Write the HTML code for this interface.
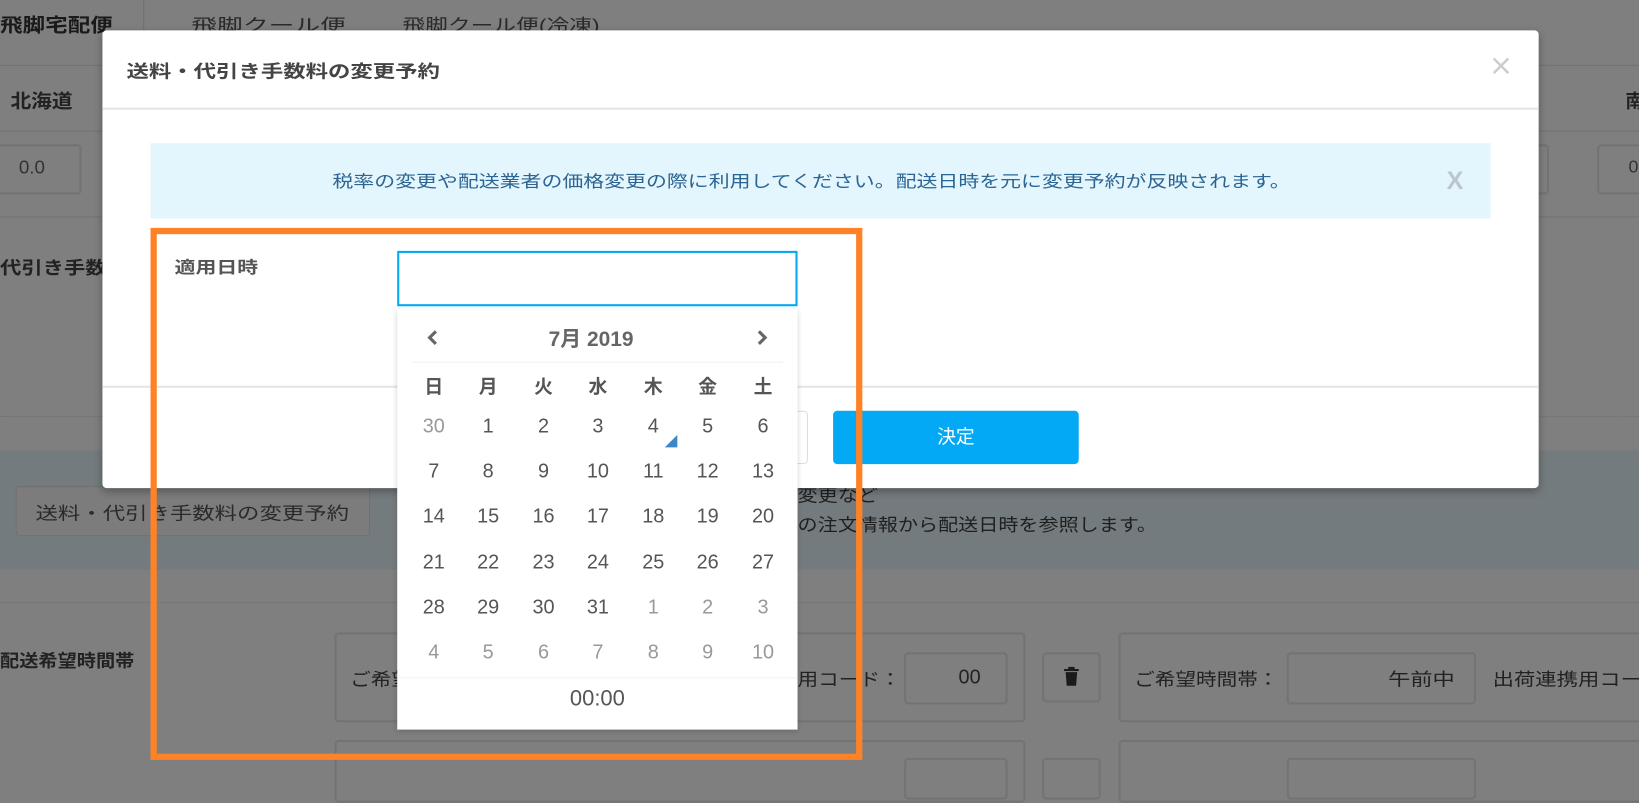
<!DOCTYPE html>
<html><head><meta charset="utf-8"><style>
html,body{margin:0;padding:0;width:1639px;height:769px;overflow:hidden;background:#7f7f7f}
#s{position:absolute;left:0;top:0;width:1568px;height:736px;transform:scale(1.04528);transform-origin:0 0;font-family:"Liberation Sans","Noto Sans CJK JP",sans-serif;color:#333}
.a{position:absolute;white-space:nowrap}
.x{transform-origin:0 50%}
.box{position:absolute;border:2px solid #737373;border-radius:4px;box-sizing:border-box}
</style></head><body><div id="s">
<div class="a x" style="left:0;top:10px;font-size:18px;font-weight:bold;color:#1a1a1a;transform:scaleX(1.2)">飛脚宅配便</div>
<div class="a" style="left:137px;top:0;width:1px;height:40px;background:#707070"></div>
<div class="a x" style="left:183px;top:10px;font-size:17px;color:#2a2a2a;transform:scaleX(1.45)">飛脚クール便</div>
<div class="a x" style="left:385px;top:10px;font-size:17px;color:#2a2a2a;transform:scaleX(1.28)">飛脚クール便(冷凍)</div>
<div class="a" style="left:0;top:62px;width:1568px;height:1px;background:#737373"></div>
<div class="a x" style="left:10px;top:83px;font-size:18px;font-weight:bold;color:#222;transform:scaleX(1.1)">北海道</div>
<div class="a" style="left:1555px;top:83px;font-size:18px;font-weight:bold;color:#222">南</div>
<div class="a" style="left:0;top:125px;width:1568px;height:1px;background:#737373"></div>
<div class="box" style="left:-5px;top:138px;width:83px;height:48px"></div>
<div class="a" style="left:18px;top:150px;font-size:18px;color:#333">0.0</div>
<div class="box" style="left:1440px;top:138px;width:42px;height:48px"></div>
<div class="box" style="left:1528px;top:138px;width:60px;height:48px"></div>
<div class="a" style="left:1558px;top:150px;font-size:17px;color:#333">0</div>
<div class="a" style="left:0;top:207px;width:1568px;height:1px;background:#737373"></div>
<div class="a x" style="left:0;top:242px;font-size:17px;font-weight:bold;color:#222;transform:scaleX(1.2)">代引き手数料</div>
<div class="a" style="left:0;top:398px;width:1568px;height:1px;border-top:1px dotted #6f6f6f"></div>
<div class="a" style="left:0;top:431px;width:1568px;height:114px;background:#747b7e"></div>
<div class="box" style="left:15px;top:465px;width:339px;height:48px;background:#7c7c7c;border:1px solid #707070"></div>
<div class="a x" style="left:34px;top:477px;font-size:17px;color:#2a2a2a;transform:scaleX(1.26)">送料・代引き手数料の変更予約</div>
<div class="a x" style="left:763px;top:460px;font-size:17px;color:#1f1f1f;transform:scaleX(1.13)">変更など</div>
<div class="a x" style="left:763px;top:488px;font-size:17px;color:#1f1f1f;transform:scaleX(1.13)">の注文情報から配送日時を参照します。</div>
<div class="a" style="left:0;top:576px;width:1568px;height:1px;border-top:1px dotted #6f6f6f"></div>
<div class="a x" style="left:0;top:618px;font-size:17px;font-weight:bold;color:#222;transform:scaleX(1.08)">配送希望時間帯</div>
<div class="box" style="left:320px;top:605px;width:661px;height:86px"></div>
<div class="a x" style="left:335px;top:636px;font-size:17px;color:#222;transform:scaleX(1.16)">ご希望</div>
<div class="a x" style="left:763px;top:636px;font-size:17px;color:#222;transform:scaleX(1.16)">用コード：</div>
<div class="box" style="left:865px;top:624px;width:99px;height:50px"></div>
<div class="a" style="left:917px;top:638px;font-size:19px;color:#222">00</div>
<div class="box" style="left:997px;top:624px;width:56px;height:48px"></div>
<svg class="a" style="left:1016px;top:637px" width="18" height="20" viewBox="0 0 18 20"><rect x="2" y="3" width="14" height="2" fill="#1a1a1a"/><rect x="6" y="1" width="6" height="2" fill="#1a1a1a"/><path d="M3.5 6h11l-1 13h-9z" fill="#1a1a1a"/></svg>
<div class="box" style="left:1070px;top:605px;width:520px;height:86px"></div>
<div class="a x" style="left:1085px;top:636px;font-size:17px;color:#222;transform:scaleX(1.16)">ご希望時間帯：</div>
<div class="box" style="left:1231px;top:624px;width:181px;height:50px"></div>
<div class="a x" style="left:1328px;top:636px;font-size:17px;color:#222;transform:scaleX(1.25)">午前中</div>
<div class="a x" style="left:1428px;top:636px;font-size:17px;color:#222;transform:scaleX(1.2)">出荷連携用コー</div>
<div class="box" style="left:320px;top:708px;width:661px;height:60px"></div>
<div class="box" style="left:865px;top:725px;width:99px;height:40px"></div>
<div class="box" style="left:997px;top:725px;width:56px;height:40px"></div>
<div class="box" style="left:1070px;top:708px;width:520px;height:60px"></div>
<div class="box" style="left:1231px;top:725px;width:181px;height:40px"></div>

<div class="a" style="left:98px;top:29px;width:1374px;height:438px;background:#fff;border-radius:4px;box-shadow:0 3px 8px rgba(0,0,0,.3)"></div>
<div class="a x" style="left:121px;top:54px;font-size:17px;font-weight:bold;color:#444;transform:scaleX(1.26)">送料・代引き手数料の変更予約</div>
<svg class="a" style="left:1427px;top:54px" width="18" height="18" viewBox="0 0 18 18"><path d="M2 2L16 16M16 2L2 16" stroke="#ccc" stroke-width="2.4"/></svg>
<div class="a" style="left:98px;top:103px;width:1374px;height:2px;background:#e5e5e5"></div>
<div class="a" style="left:144px;top:137px;width:1282px;height:72px;background:#e3f5fd"></div>
<div class="a x" style="left:318px;top:160px;font-size:16px;color:#2c6593;transform:scaleX(1.25)">税率の変更や配送業者の価格変更の際に利用してください。配送日時を元に変更予約が反映されます。</div>
<div class="a" style="left:1384px;top:160px;font-size:24px;font-weight:bold;color:#bcc6cc">X</div>
<div class="a" style="left:98px;top:369px;width:1374px;height:2px;background:#e5e5e5"></div>
<div class="a" style="left:650px;top:393px;width:123px;height:51px;border:1px solid #ddd;border-radius:4px;box-sizing:border-box;background:#fff"></div>
<div class="a" style="left:797px;top:393px;width:235px;height:51px;background:#03a9f4;border-radius:4px;color:#fff;font-size:18px;text-align:center;line-height:51px">決定</div>

<div class="a x" style="left:167px;top:242px;font-size:16px;font-weight:bold;color:#555;transform:scaleX(1.25)">適用日時</div>
<div class="a" style="left:380px;top:240px;width:383px;height:53px;border:2px solid #03a9f4;box-sizing:border-box;background:#fff"></div>

<div class="a" style="left:380px;top:296px;width:383px;height:402px;background:#fff;box-shadow:0 2px 5px rgba(0,0,0,.18)">
<div class="a" style="left:-6px;top:12px;width:383px;text-align:center;font-size:20px;font-weight:bold;color:#666">7月 2019</div>
<svg class="a" style="left:28px;top:19px" width="12" height="16" viewBox="0 0 12 16"><path d="M9 2L3 8l6 6" stroke="#666" stroke-width="3" fill="none"/></svg>
<svg class="a" style="left:343px;top:19px" width="12" height="16" viewBox="0 0 12 16"><path d="M3 2l6 6-6 6" stroke="#666" stroke-width="3" fill="none"/></svg>
<div class="a" style="left:14px;top:50px;width:355px;height:1px;background:#f0f0f0"></div>
<div class="a" style="left:0;top:352px;width:383px;height:1px;background:#f3f3f3"></div>
<div class="a" style="left:0;top:361px;width:383px;text-align:center;font-size:21px;color:#555">00:00</div>
<div class="a" style="left:256px;top:120px;width:0;height:0;border-left:12px solid transparent;border-bottom:12px solid #3c87c8"></div>
</div>
<div id="days"></div>

<div class="a" style="left:144px;top:218px;width:681px;height:509px;border:6px solid #ff8226;box-sizing:border-box"></div>
</div>
<script>
var cols=[415,467,520,572,625,677,730],rows=[368,410,453,496,540,583,626];
var wd="日月火水木金土".split("");
var h="";
for(var c=0;c<7;c++)h+='<div class="a" style="left:'+(cols[c]-26)+'px;top:'+(rows[0]-12)+'px;width:52px;text-align:center;font-size:18px;font-weight:bold;color:#555">'+wd[c]+'</div>';
for(var r=1;r<7;r++)for(var c=0;c<7;c++){
 var v,g=false;
 if(r==1&&c==0){v=30;g=true}
 else{v=(r-1)*7+c;if(v>31){v=v-31;g=true}}
 h+='<div class="a" style="left:'+(cols[c]-26)+'px;top:'+(rows[r]-12)+'px;width:52px;text-align:center;font-size:19px;color:'+(g?'#999':'#555')+'">'+v+'</div>';
}
document.getElementById('days').innerHTML=h;
</script>
</body></html>
